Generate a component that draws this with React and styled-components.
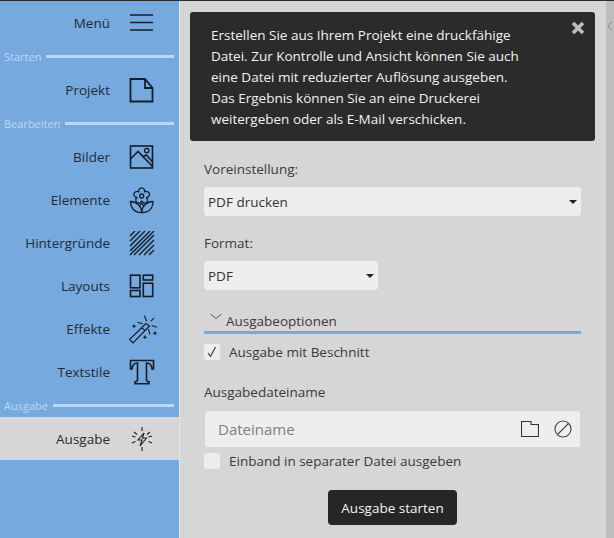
import React from 'react';
import styled, { createGlobalStyle } from 'styled-components';

const font = '"Open Sans", "Noto Sans", sans-serif';
const ink = '#141e2a';

const GlobalStyle = createGlobalStyle`
  html, body {
    margin: 0;
    padding: 0;
    height: 100%;
    overflow: hidden;
    background: #d6d6d6;
  }
  #root {
    height: 100%;
  }
`;

const Page = styled.div`
  width: 614px;
  height: 538px;
  display: flex;
  flex-direction: column;
  font-family: ${font};
  color: #333;
`;

const TopLine = styled.div`
  height: 1px;
  flex: none;
  background: #2b2b2b;
`;

const Body = styled.div`
  flex: 1;
  display: flex;
  min-height: 0;
`;

const Sidebar = styled.nav`
  width: 179px;
  flex: none;
  background: #76a9dd;
  border-right: 1px solid #dfe6ee;
`;

const NavItem = styled.div`
  height: 43px;
  display: flex;
  align-items: center;
  justify-content: flex-end;
  padding-right: 24px;
  background: ${p => p.$active ? '#d6d6d6' : 'transparent'};
  color: ${p => p.$active ? '#2b2b2b' : '#1f2b3a'};
  font-size: 13.5px;
`;

const NavIcon = styled.span`
  width: 26px;
  height: 26px;
  margin: 2px 0 0 19px;
  display: flex;
  align-items: center;
  justify-content: center;
  flex: none;

  svg {
    flex: none;
  }
`;

const Section = styled.div`
  height: 14px;
  margin: 5px 0;
  display: flex;
  align-items: center;
  gap: 5px;
  padding: 0 5px 0 4px;
  color: #b9d8f8;
  font-size: 11px;

  &::after {
    content: '';
    flex: 1;
    height: 3px;
    background: #b9d8f8;
  }
`;

const Main = styled.main`
  flex: 1;
  display: flex;
  flex-direction: column;
  padding: 11px 0 0 10px;
  min-width: 0;
`;

const Notice = styled.div`
  position: relative;
  width: 405px;
  height: 129px;
  box-sizing: border-box;
  padding: 13px 21px;
  background: #2b2b2b;
  border-radius: 3px;
  color: #f2f2f2;
  font-size: 13.5px;
  line-height: 21px;
`;

const NoticeLine = styled.div`
  white-space: nowrap;
`;

const Close = styled.span`
  position: absolute;
  top: 9px;
  right: 10px;
  display: flex;
`;

const Form = styled.div`
  width: 377px;
  margin-left: 14px;
  display: flex;
  flex-direction: column;
`;

const Label = styled.div`
  font-size: 13.5px;
  line-height: 18px;
  color: #3a3a3a;
  margin-top: ${p => p.$top}px;
`;

const Select = styled.div`
  width: ${p => p.$w}px;
  height: 29px;
  margin-top: 9px;
  box-sizing: border-box;
  padding: 0 4px;
  display: flex;
  align-items: center;
  justify-content: space-between;
  background: #eeeeee;
  border-radius: 4px;
  font-size: 13.5px;
  color: #333;
`;

const Caret = styled.span`
  width: 0;
  height: 0;
  border-left: 4px solid transparent;
  border-right: 4px solid transparent;
  border-top: 4px solid #222;
`;

const Collapse = styled.div`
  height: 22px;
  margin-top: 18px;
  padding: 0 0 1px 6px;
  display: flex;
  align-items: flex-end;
  gap: 4px;
  border-bottom: 3px solid #76a9dd;
  font-size: 13.5px;
  line-height: 18px;
  color: #3a3a3a;
`;

const Chevron = styled.svg`
  align-self: flex-start;
  margin-top: 5px;
`;

const CheckRow = styled.div`
  height: 16px;
  margin-top: ${p => p.$top}px;
  display: flex;
  align-items: center;
  gap: 9px;
  font-size: 13.5px;
  color: #3a3a3a;
`;

const CheckBox = styled.span`
  width: 16px;
  height: 16px;
  flex: none;
  display: flex;
  align-items: center;
  justify-content: center;
  background: #eeeeee;
  border-radius: 3px;
`;

const FileField = styled.div`
  height: 36px;
  margin-top: 10px;
  margin-left: 1px;
  width: 375px;
  box-sizing: border-box;
  padding: 0 8px 0 13px;
  display: flex;
  align-items: center;
  gap: 15px;
  background: #eeeeee;
  border-radius: 3px;
`;

const Placeholder = styled.div`
  flex: 1;
  font-size: 15px;
  color: #7a828a;
`;

const StartButton = styled.div`
  align-self: center;
  width: 129px;
  height: 35px;
  margin-top: 21px;
  display: flex;
  align-items: center;
  justify-content: center;
  background: #262626;
  border-radius: 4px;
  color: #f4f4f4;
  font-size: 13.5px;
  font-weight: 500;
`;

const Scroller = styled.div`
  width: 8px;
  flex: none;
  background: #bdbdbd;
  display: flex;
  justify-content: center;
  padding-top: 20px;
  box-sizing: border-box;
`;

const Ic = ({ w = 26, h = 26, sw = 1.8, color = ink, children }) => (
  <svg width={w} height={h} viewBox={`0 0 ${w} ${h}`} fill="none" stroke={color} strokeWidth={sw}>
    {children}
  </svg>
);

const star = (x, y) => `M${x} ${y - 2.4}l.7 1.7 1.700 .7-1.700 .7-.7 1.700-.7-1.700-1.700-.7 1.700-.7z`;

const MenuIcon = () => (
  <Ic sw={1.7}>
    <path d="M1 4h23M1 11.500h23M1 19h23" />
  </Ic>
);

const PageIcon = () => (
  <Ic>
    <path d="M1.500 1h14.500l7.500 9v13.500H1.500zM16 1v9h7.500" />
  </Ic>
);

const ImageIcon = () => (
  <Ic sw={1.6}>
    <rect x="1.500" y="1" width="22" height="22" />
    <path d="M1.500 14L9 6.500l14.500 15M14 11.500l3.500-1.500 6 7" />
    <circle cx="17.700" cy="5.500" r="2.200" strokeWidth="1.300" />
  </Ic>
);

const FlowerIcon = () => (
  <Ic h={28} sw={1.3}>
    <circle cx="12.700" cy="9" r="2" />
    <path d="M10.050 5.360A3 3 0 1 1 15.350 5.360A3 3 0 1 1 17 10.400A3 3 0 1 1 12.700 13.500A3 3 0 1 1 8.400 10.400A3 3 0 1 1 10.050 5.360z" />
    <path d="M1.500 14.500C7 14.500 12.700 19 12.700 25.500C5.500 25.500 1.500 21 1.500 14.500z" />
    <path d="M24 14.500C18.500 14.500 12.700 19 12.700 25.500C20 25.500 24 21 24 14.500z" />
    <path d="M12.700 16l-2.500 3.700M12.700 16l2.500 3.700" />
  </Ic>
);

const HatchIcon = () => (
  <Ic sw={1.4}>
    <path d="M1 5L6 0M1 10L11 0M1 15L16 0M1 20L21 0M1 24L25 0M5 24L25 4M10 24L25 9M15 24l10-10M20 24l5-5" />
  </Ic>
);

const LayoutsIcon = () => (
  <Ic sw={1.6}>
    <rect x="1.500" y="1.200" width="9.500" height="12.600" />
    <rect x="1.500" y="16.500" width="9.500" height="6" />
    <rect x="14.300" y="1.200" width="9.400" height="4.800" />
    <rect x="14.300" y="9.200" width="9.400" height="13.300" />
  </Ic>
);

const WandIcon = () => (
  <Ic w={30} h={30} sw={1.1}>
    <path d="M2.500 24.500L19 8.500l3.500 2.500L6 28zM14.500 12.800l3.500 2.700" />
    <path d="M17.300.5l2.400 5.700M27.300 2.800l-3.600 3.400M29.700 12.200l-5-1.700M10.300 7.200l5.400 1.600M21.300 13.800l1.700 5.700" />
    <path d={`${star(7, 11.200)}${star(18, 22.200)}${star(28, 18.200)}`} fill={ink} stroke="none" />
  </Ic>
);

const TypeIcon = () => (
  <Ic h={28} sw={1.6}>
    <path d="M1.500 1.500h23v8.500H23c-.3-3.500-2-6-5.500-6v17c0 1 .5 1.700 2.500 1.700v2H6v-2c2 0 2.500-.7 2.500-1.700v-17C5 4 3.300 6.500 3 10H1.500z" />
  </Ic>
);

const SparkIcon = () => (
  <Ic w={22} h={26} sw={1.1} color="#222">
    <path d="M13 6L7 13h4l-2 6 6.500-8h-4z" />
    <path d="M11 0v4M11 20v4M3 5l3 2.500M19 5l-3 2.500M1 16l3.500-1.500M21 16l-3.500-1.500M1 9l3.500 1M21 9l-3.500 1" />
  </Ic>
);

const NavRow = ({ label, icon, active }) => (
  <NavItem $active={active}>
    {label}
    <NavIcon>{icon}</NavIcon>
  </NavItem>
);

export default function App() {
  return (
    <Page>
      <GlobalStyle />
      <TopLine />
      <Body>
        <Sidebar>
          <NavRow label="Menü" icon={<MenuIcon />} />
          <Section>Starten</Section>
          <NavRow label="Projekt" icon={<PageIcon />} />
          <Section>Bearbeiten</Section>
          <NavRow label="Bilder" icon={<ImageIcon />} />
          <NavRow label="Elemente" icon={<FlowerIcon />} />
          <NavRow label="Hintergründe" icon={<HatchIcon />} />
          <NavRow label="Layouts" icon={<LayoutsIcon />} />
          <NavRow label="Effekte" icon={<WandIcon />} />
          <NavRow label="Textstile" icon={<TypeIcon />} />
          <Section>Ausgabe</Section>
          <NavRow label="Ausgabe" icon={<SparkIcon />} active />
        </Sidebar>
        <Main>
          <Notice>
            <NoticeLine>Erstellen Sie aus Ihrem Projekt eine druckfähige</NoticeLine>
            <NoticeLine>Datei. Zur Kontrolle und Ansicht können Sie auch</NoticeLine>
            <NoticeLine>eine Datei mit reduzierter Auflösung ausgeben.</NoticeLine>
            <NoticeLine>Das Ergebnis können Sie an eine Druckerei</NoticeLine>
            <NoticeLine>weitergeben oder als E-Mail verschicken.</NoticeLine>
            <Close>
              <svg width="14" height="14" viewBox="0 0 14 14" stroke="#bdbdbd" strokeWidth="3.600">
                <path d="M2 2l10 10M12 2L2 12" />
              </svg>
            </Close>
          </Notice>
          <Form>
            <Label $top={19}>Voreinstellung:</Label>
            <Select $w={377}>PDF drucken<Caret /></Select>
            <Label $top={18}>Format:</Label>
            <Select $w={174}>PDF<Caret /></Select>
            <Collapse>
              <Chevron width="12" height="7" viewBox="0 0 12 7" fill="none" stroke="#555" strokeWidth="1">
                <path d="M.500 1L6 5.500 11.500 1" />
              </Chevron>
              Ausgabeoptionen
            </Collapse>
            <CheckRow $top={10}>
              <CheckBox>
                <svg width="12" height="12" viewBox="0 0 12 12" fill="none" stroke="#333" strokeWidth="1.100">
                  <path d="M2 7l2.500 3.500L9.500 1" />
                </svg>
              </CheckBox>
              Ausgabe mit Beschnitt
            </CheckRow>
            <Label $top={23}>Ausgabedateiname</Label>
            <FileField>
              <Placeholder>Dateiname</Placeholder>
              <svg width="18" height="16" viewBox="0 0 18 16" fill="none" stroke="#333" strokeWidth="1.100">
                <path d="M.500.500h9.500v3h7.500v12H.500z" />
              </svg>
              <svg width="18" height="18" viewBox="0 0 18 18" fill="none" stroke="#444" strokeWidth="1.100">
                <circle cx="9" cy="9" r="8" />
                <path d="M3.500 14.500l11-11" />
              </svg>
            </FileField>
            <CheckRow $top={6}>
              <CheckBox />
              Einband in separater Datei ausgeben
            </CheckRow>
            <StartButton>Ausgabe starten</StartButton>
          </Form>
        </Main>
        <Scroller>
          <svg width="6" height="10" viewBox="0 0 6 10" fill="none" stroke="#8a8a8a" strokeWidth="1">
            <path d="M5 1L1 5l4 4" />
          </svg>
        </Scroller>
      </Body>
    </Page>
  );
}
